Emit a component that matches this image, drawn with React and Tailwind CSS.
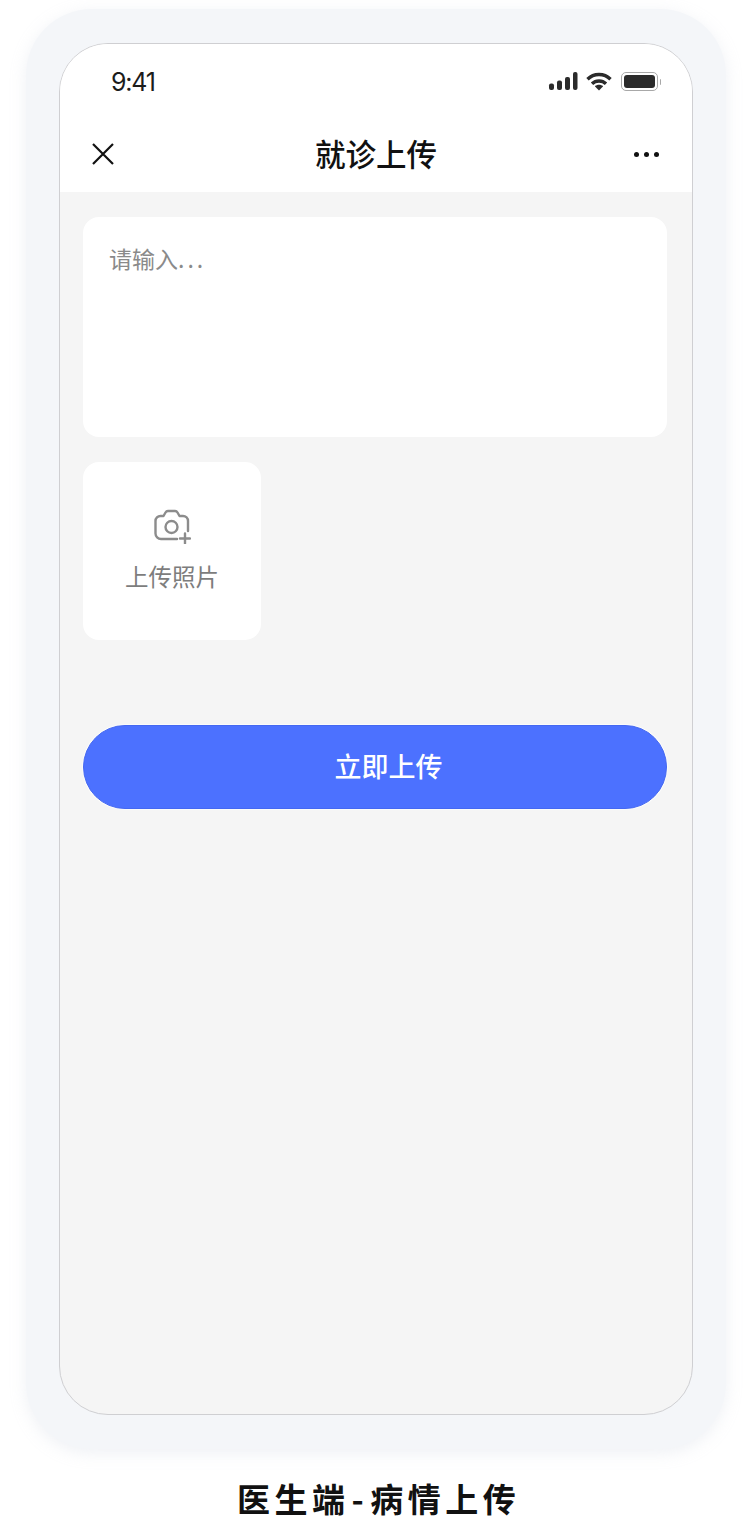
const cjk = "font-['Noto_Sans_CJK_SC','Noto_Sans',sans-serif]";

function StatusIcons() {
  return (
    <div className="flex items-center">
      <svg width="30" height="19" viewBox="0 0 30 19" fill="#2b2b2b">
        <rect x="1" y="11.500" width="5" height="6.500" rx="2" />
        <rect x="9" y="8.500" width="5" height="9.500" rx="2" />
        <rect x="17" y="5" width="5" height="13" rx="2" />
        <rect x="25" y="0" width="4.500" height="18" rx="2" />
      </svg>
      <svg className="ml-[8px]" width="26" height="19" viewBox="0 0 26 19" fill="none" stroke="#2b2b2b" strokeWidth="3.400">
        <path d="M1.500 7.200C7.800 .9 18.200 .9 24.500 7.200" />
        <path d="M6 11.800C9.800 8 16.200 8 20 11.800" />
        <path d="M8.800 14.200L13 18.500L17.200 14.200C14.800 12.200 11.200 12.200 8.800 14.200Z" fill="#2b2b2b" stroke="none" />
      </svg>
      <div className="ml-[9px] flex items-center">
        <div className="flex h-[19px] w-[37px] items-center justify-center rounded-[5px] border-[1.5px] border-[#a8a8a8]">
          <div className="h-[13px] w-[31px] rounded-[3px] bg-[#2b2b2b]" />
        </div>
        <div className="ml-[1.5px] h-[6px] w-[1.5px] rounded-r-full bg-[#a8a8a8]" />
      </div>
    </div>
  );
}

export default function App() {
  return (
    <div className={`h-[1521px] w-[750px] overflow-hidden bg-white ${cjk}`}>
      <div className="pt-[9px]">
        {/* device frame */}
        <div className="mx-[26px] h-[1440px] w-[700px] rounded-[66px] bg-[#f4f6f9] px-[33px] pt-[34px] shadow-[0_4px_16px_rgba(190,198,216,0.25)]">
          <div className="flex h-[1372px] w-[634px] flex-col overflow-hidden rounded-[49px] border border-[#cfcfd2] bg-[#f5f5f5]">
            {/* status + nav */}
            <div className="h-[148px] shrink-0 bg-white">
              <div className="flex h-[72px] items-start justify-between pl-[51px] pr-[31px] pt-[21px]">
                <span className="font-['Inter',sans-serif] text-[25px] leading-[34px] tracking-[-1.2px] text-[#1c1c1c]">9:41</span>
                <div className="pt-[7px]">
                  <StatusIcons />
                </div>
              </div>
              <div className="relative flex h-[76px] items-center justify-between pl-[32px] pr-[33px]">
                <svg width="22" height="22" viewBox="0 0 22 22" stroke="#111" strokeWidth="2.200" fill="none">
                  <path d="M1 1L21 21M21 1L1 21" />
                </svg>
                <span className="absolute inset-x-0 bottom-[17px] text-center text-[30.5px] font-medium leading-[44px] text-[#111]">就诊上传</span>
                <div className="mt-[1px] flex gap-[5px]">
                  <div className="size-[5px] rounded-full bg-[#111]" />
                  <div className="size-[5px] rounded-full bg-[#111]" />
                  <div className="size-[5px] rounded-full bg-[#111]" />
                </div>
              </div>
            </div>

            {/* content */}
            <div className="flex flex-col pl-[23px] pr-[25px] pt-[25px]">
              <div className="h-[220px] rounded-[16px] bg-white px-[26px] pt-[24px]">
                <span className="text-[23px] leading-[34px] text-[#8a8a8a]">
                  请输入<span className="tracking-[3px]">...</span>
                </span>
              </div>
              <div className="mt-[25px] flex h-[178px] w-[178px] flex-col items-center rounded-[16px] bg-white pt-[46px]">
                <svg width="38" height="36" viewBox="0 0 38 36" fill="none" stroke="#8c8c8c" strokeWidth="2.400" strokeLinecap="round" strokeLinejoin="round">
                  <path d="M24 31H8a5.500 5.500 0 0 1-5.500-5.500V13A5 5 0 0 1 7.500 8H10.500L12.500 4.500A3 3 0 0 1 15 3H22a3 3 0 0 1 2.500 1.500L26.500 8H30a5 5 0 0 1 5 5V23" />
                  <circle cx="18.500" cy="19" r="6" />
                  <path d="M32 25.500V35.500M27 30.500H37" />
                </svg>
                <span className="mt-[15px] text-[23.5px] leading-[34px] text-[#7d7d7d]">上传照片</span>
              </div>
              <button className="mt-[85px] flex h-[84px] w-[584px] items-center justify-center rounded-full border border-[#4468f2] bg-[#4c71ff] pb-[4px] pl-[27px] text-[27px] font-medium leading-none text-white shadow-[0_0_0_1px_rgba(255,255,255,0.6)]">
                立即上传
              </button>
            </div>
          </div>
        </div>
        <p className="mt-[29px] pl-[237px] text-[33px] font-bold leading-[40px] tracking-[4.5px] text-[#111]">
          医生端<span className="px-[2px]">-</span>病情上传
        </p>
      </div>
    </div>
  );
}
